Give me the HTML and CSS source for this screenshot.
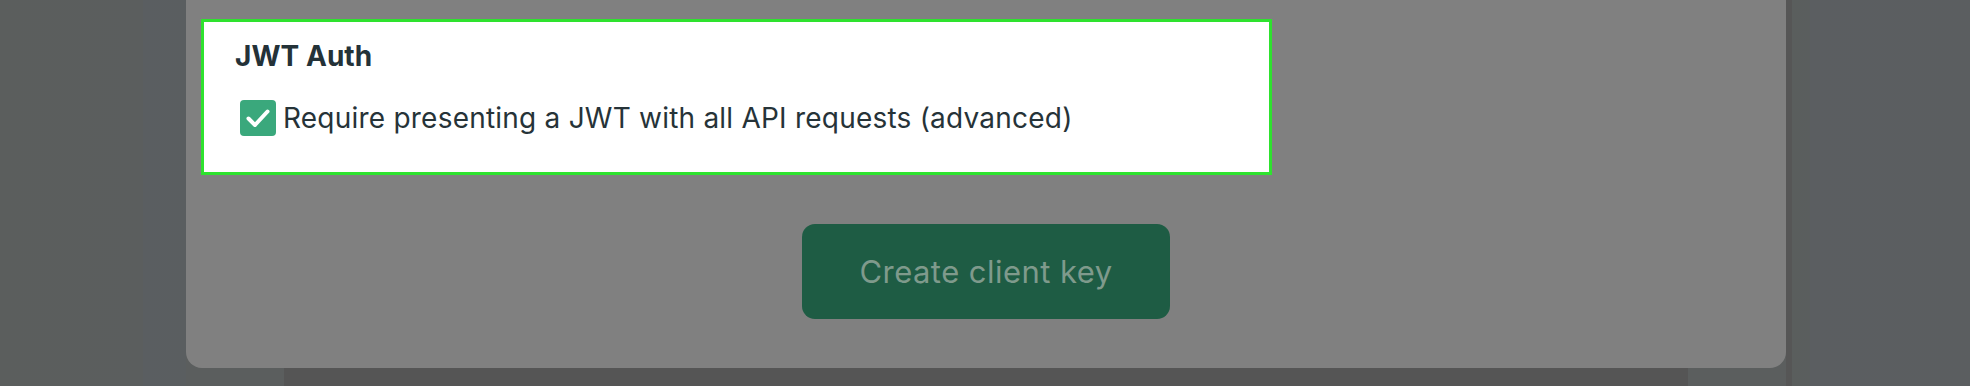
FILE: index.html
```html
<!DOCTYPE html>
<html lang="en">
<head>
<meta charset="utf-8">
<title>Create client key</title>
<link rel="stylesheet" href="styles.css">
</head>
<body>
<div class="stage">
  <div class="modal">
    <section class="jwt-card">
      <h3 class="jwt-title">JWT Auth</h3>
      <label class="check-row">
        <span class="checkbox">
          <svg viewBox="0 0 36 36" width="36" height="36" aria-hidden="true">
            <polyline points="8.5,18.5 15,25 27.5,11.5" fill="none" stroke="#ffffff" stroke-width="4" stroke-linecap="round" stroke-linejoin="round"/>
          </svg>
        </span>
        <span class="check-label">Require presenting a JWT with all API requests (advanced)</span>
      </label>
    </section>
    <div class="actions">
      <button class="create-btn" type="button">Create client key</button>
    </div>
  </div>
  <div class="under-strip"></div>
</div>
</body>
</html>
```

FILE: styles.css
```css
html, body {
  margin: 0;
  padding: 0;
}

body {
  width: 1970px;
  height: 386px;
  overflow: hidden;
  background: linear-gradient(90deg, #5b5e5d 0px, #5b5e5e 143px, #5a5e61 143px, #5a5e60 186px, #5b5e5e 186px, #5b5e5e 1786px, #565656 1786px, #565656 1792px, #5a5e5d 1792px, #5a5e5e 1810px, #5b5e61 1810px, #5b5e60 1970px);
  font-family: Inter, "Noto Sans", "Liberation Sans", sans-serif;
}

.stage {
  display: flex;
  flex-direction: column;
}

.modal {
  margin-left: 186px;
  width: 1600px;
  height: 368px;
  box-sizing: border-box;
  background: #808080;
  border-radius: 0 0 16px 16px;
  padding: 19px 0 0 15px;
  display: flex;
  flex-direction: column;
}

.jwt-card {
  width: 1071px;
  height: 156px;
  box-sizing: border-box;
  border: 3px solid #2ee22e;
  background: #ffffff;
  padding: 17px 0 0 31px;
  display: flex;
  flex-direction: column;
  gap: 27px;
}

.jwt-title {
  margin: 0;
  font-size: 28px;
  line-height: 34px;
  font-weight: 700;
  color: #243238;
  letter-spacing: 0.05px;
}

.check-row {
  display: flex;
  align-items: center;
  gap: 7px;
  padding-left: 5px;
}

.checkbox {
  width: 36px;
  height: 36px;
  border-radius: 4px;
  background: #3aa87c;
  display: flex;
  flex: none;
}

.check-label {
  font-size: 28px;
  line-height: 34px;
  color: #263338;
  letter-spacing: 0.22px;
}

.actions {
  display: flex;
  justify-content: center;
  padding-right: 15px;
  margin-top: 49px;
}

.create-btn {
  width: 368px;
  height: 95px;
  border: none;
  border-radius: 13px;
  background: #1e5c44;
  color: #7f9a8c;
  font-family: Inter, "Noto Sans", "Liberation Sans", sans-serif;
  font-size: 31px;
  line-height: 36px;
  letter-spacing: 0.45px;
  padding: 0;
}

.under-strip {
  margin-left: 284px;
  width: 1404px;
  height: 18px;
  background: #555555;
}
```
